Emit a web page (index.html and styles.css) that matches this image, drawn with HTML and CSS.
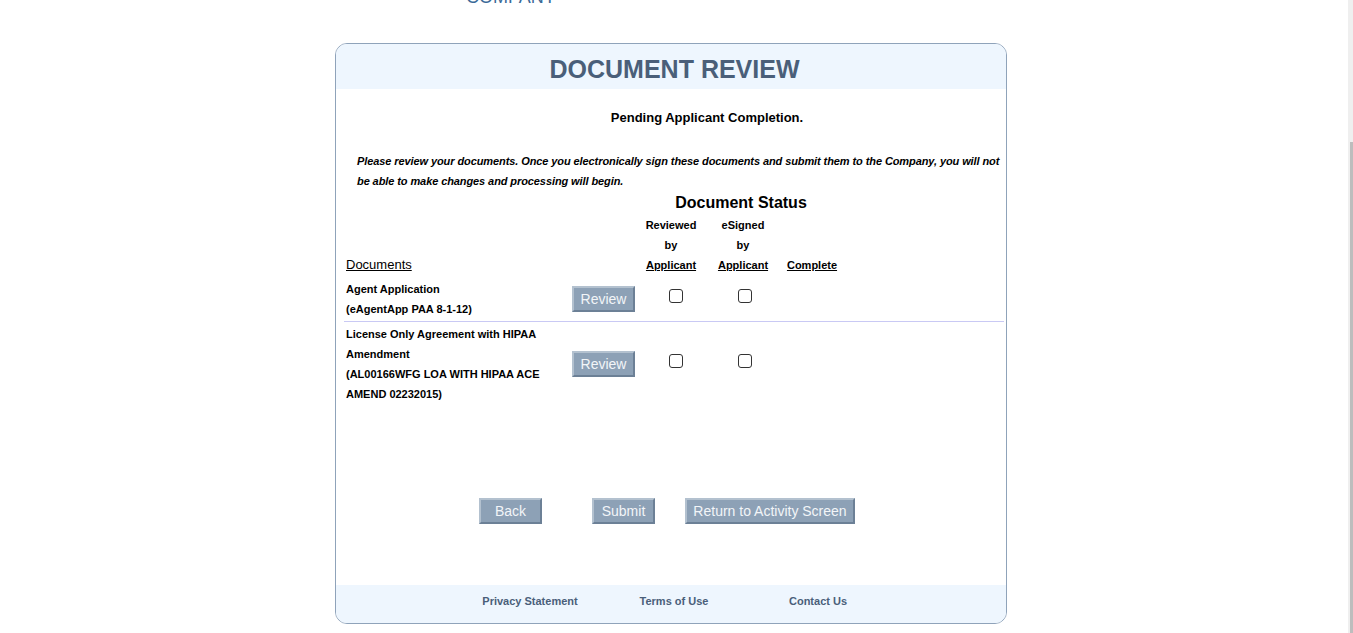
FILE: index.html
```html
<!DOCTYPE html>
<html lang="en">
<head>
<meta charset="utf-8">
<title>Document Review</title>
<link rel="stylesheet" href="styles.css">
</head>
<body>
<div class="topbar"><div class="brand">COMPANY</div></div>

<div class="panel">
  <div class="panel-head"><h1>DOCUMENT REVIEW</h1></div>
  <div class="panel-body">
    <p class="status">Pending Applicant Completion.</p>
    <p class="notice">Please review your documents. Once you electronically sign these documents and submit them to the Company, you will not be able to make changes and processing will begin.</p>

    <div class="docs">
      <div class="row row-title">
        <div class="ds-title">Document Status</div>
      </div>
      <div class="row row-head">
        <div class="h-docs">Documents</div>
        <div class="h-col h-rev">Reviewed<br>by<br><u>Applicant</u></div>
        <div class="h-col h-sig">eSigned<br>by<br><u>Applicant</u></div>
        <div class="h-col h-comp"><u>Complete</u></div>
      </div>

      <div class="row doc doc-first">
        <div class="doc-name">Agent Application<br>(eAgentApp PAA 8-1-12)</div>
        <div class="doc-btn"><button class="btn btn-review" type="button">Review</button></div>
        <div class="cb cb-rev"><span class="box"></span></div>
        <div class="cb cb-sig"><span class="box"></span></div>
      </div>

      <div class="row doc">
        <div class="doc-name">License Only Agreement with HIPAA Amendment<br>(AL00166WFG LOA WITH HIPAA ACE AMEND 02232015)</div>
        <div class="doc-btn"><button class="btn btn-review" type="button">Review</button></div>
        <div class="cb cb-rev"><span class="box"></span></div>
        <div class="cb cb-sig"><span class="box"></span></div>
      </div>
    </div>

    <div class="actions">
      <button class="btn btn-back" type="button">Back</button>
      <button class="btn btn-submit" type="button">Submit</button>
      <button class="btn btn-return" type="button">Return to Activity Screen</button>
    </div>
  </div>
  <div class="panel-foot">
    <a class="foot-link" href="#">Privacy Statement</a>
    <a class="foot-link" href="#">Terms of Use</a>
    <a class="foot-link" href="#">Contact Us</a>
  </div>
</div>

<div class="scrollbar"><div class="scroll-thumb"></div></div>
</body>
</html>
```

FILE: styles.css
```css
html, body {
  margin: 0;
  padding: 0;
  background: #ffffff;
}

body {
  font-family: "Liberation Sans", Arial, sans-serif;
  color: #000;
}

.topbar {
  height: 43px;
  overflow: hidden;
}

.brand {
  margin-top: -13px;
  margin-left: 466px;
  font-size: 18px;
  color: #3b6a98;
  line-height: 21px;
}

.panel {
  margin-left: 335px;
  width: 670px;
  border: 1px solid #8fa3ba;
  border-radius: 12px;
  overflow: hidden;
  background: #fff;
}

.panel-head {
  background: #eef6fe;
  height: 45px;
  box-sizing: border-box;
  padding-top: 6px;
  padding-left: 7px;
  text-align: center;
}

.panel-head h1 {
  margin: 0;
  font-size: 25px;
  line-height: 39px;
  font-weight: bold;
  color: #4a5f79;
}

.panel-body {
  height: 496px;
  box-sizing: border-box;
  padding-top: 19px;
}

.status {
  margin: 0;
  font-size: 13px;
  font-weight: bold;
  line-height: 20px;
  text-align: center;
  padding-left: 72px;
}

.notice {
  margin: 23px 0 0 21px;
  width: 646px;
  font-size: 11px;
  font-weight: bold;
  font-style: italic;
  line-height: 20px;
  letter-spacing: -0.09px;
}

.docs {
  margin: 0 2px 0 8px;
  display: flex;
  flex-direction: column;
}

.row {
  display: grid;
  grid-template-columns: 228px 63px 72px 72px 66px 1fr;
}

.row-title {
  height: 24px;
}

.ds-title {
  grid-column: 3 / 6;
  text-align: center;
  font-size: 16px;
  font-weight: bold;
  line-height: 24px;
  padding-left: 2px;
}

.row-head {
  height: 60px;
  margin-bottom: 2px;
}

.h-docs {
  grid-column: 1;
  align-self: end;
  padding-left: 2px;
  font-size: 13px;
  line-height: 20px;
  text-decoration: underline;
}

.h-col {
  font-size: 11px;
  font-weight: bold;
  line-height: 20px;
  text-align: center;
  align-self: end;
}

.h-rev { grid-column: 3; }
.h-sig { grid-column: 4; }
.h-comp { grid-column: 5; }

.doc {
  padding: 2px 0;
}

.doc-first {
  border-bottom: 1px solid #c9c9f4;
}

.doc-name {
  padding-left: 2px;
  font-size: 11px;
  font-weight: bold;
  line-height: 20px;
  padding-right: 24px;
}

.doc-btn {
  align-self: center;
}

.cb {
  align-self: center;
  margin-bottom: 6px;
  height: 14px;
}

.cb-rev { padding-left: 34px; }
.cb-sig { padding-left: 31px; }

.box {
  display: block;
  width: 14px;
  height: 14px;
  box-sizing: border-box;
  border: 1px solid #333;
  border-radius: 3px;
  background: #fff;
}

.btn {
  display: block;
  box-sizing: border-box;
  height: 26px;
  margin: 0;
  padding: 0;
  font-family: "Liberation Sans", Arial, sans-serif;
  font-size: 14px;
  line-height: 22px;
  color: #f2f5f8;
  background: #8da1b6;
  border: 2px solid;
  border-color: #b3c1cf #6c8096 #6c8096 #b3c1cf;
  text-align: center;
}

.btn-review { width: 63px; }

.actions {
  display: flex;
  margin-top: 92px;
  padding-left: 143px;
}

.btn-back { width: 63px; }
.btn-submit { width: 63px; margin-left: 50px; }
.btn-return { width: 170px; margin-left: 30px; }

.panel-foot {
  background: #eef6fe;
  height: 38px;
  box-sizing: border-box;
  padding-top: 9px;
  padding-left: 6px;
  display: flex;
  justify-content: center;
}

.foot-link {
  width: 144px;
  text-align: center;
  font-size: 11px;
  font-weight: bold;
  line-height: 14px;
  color: #4a5f7a;
  text-decoration: none;
}

.scrollbar {
  position: fixed;
  top: 0;
  right: 0;
  width: 5px;
  height: 100%;
  background: #efefef;
}

.scroll-thumb {
  position: absolute;
  top: 142px;
  right: 0;
  width: 3px;
  bottom: 0;
  background: #bdbdbd;
}
```
